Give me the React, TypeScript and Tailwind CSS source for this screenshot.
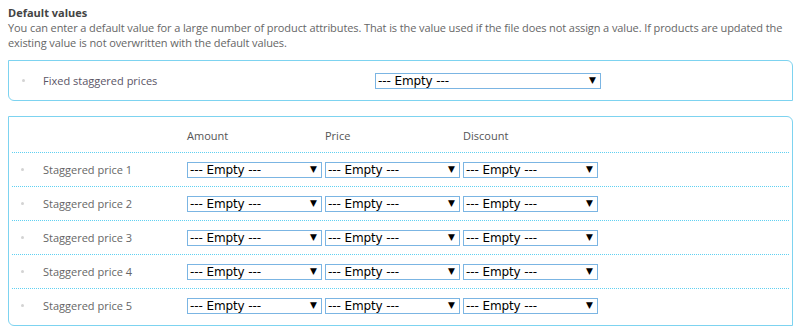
import React from "react";

function FakeSelect({ width }: { width: string }) {
  return (
    <div
      className={`${width} h-[16px] border border-[#7bb5e3] bg-white flex items-center justify-between pl-[2px] pr-[4px] text-black text-[12px] leading-none font-['DejaVu_Sans',Verdana,sans-serif]`}
    >
      <span className="tracking-[-0.1px]">--- Empty ---</span>
      <span className="text-[9px]">▼</span>
    </div>
  );
}

function Bullet() {
  return <span className="block w-[3px] h-[3px] rounded-full bg-[#d3d3d3] ml-[9px]" />;
}

export default function App() {
  const rows = [1, 2, 3, 4, 5];

  return (
    <div className="w-[801px] h-[334px] bg-white px-[8px] pt-[5px] font-['Open_Sans','Liberation_Sans',sans-serif] text-[11px] leading-[15px]">
      <h3 className="font-bold text-[#444]">Default values</h3>
      <p className="text-[#666] tracking-[-0.1px]">
        You can enter a default value for a large number of product attributes. That is the value used if the file
        does not assign a value. If products are updated the existing value is not overwritten with the default
        values.
      </p>

      {/* Fixed staggered prices */}
      <div className="mt-[10px] h-[41px] border border-[#7dd3f0] rounded-tr-[6px] rounded-bl-[6px] px-[4px] flex items-center">
        <Bullet />
        <span className="ml-[18px] w-[332px] text-[#5a5566]">Fixed staggered prices</span>
        <FakeSelect width="w-[226px]" />
      </div>

      {/* Staggered prices */}
      <div className="mt-[15px] h-[210px] border border-[#7dd3f0] rounded-tr-[6px] rounded-bl-[6px] px-[3px]">
        <div className="h-[35px] flex items-center pt-[2px] text-[#555]">
          <span className="w-[175px]" />
          <span className="w-[138px]">Amount</span>
          <span className="w-[138px]">Price</span>
          <span>Discount</span>
        </div>
        {rows.map((n) => (
          <div
            key={n}
            className="h-[34px] border-t border-dotted border-[#5fd0f2] flex items-center"
          >
            <span className="w-[31px]">
              <Bullet />
            </span>
            <span className="w-[144px] text-[#666]">Staggered price {n}</span>
            <div className="flex gap-[3px]">
              <FakeSelect width="w-[135px]" />
              <FakeSelect width="w-[135px]" />
              <FakeSelect width="w-[135px]" />
            </div>
          </div>
        ))}
      </div>
    </div>
  );
}
